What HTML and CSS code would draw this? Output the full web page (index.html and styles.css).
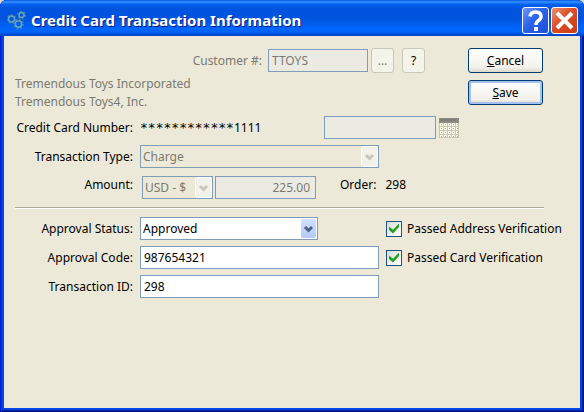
FILE: index.html
```html
<!DOCTYPE html>
<html lang="en">
<head>
  <meta charset="UTF-8" />
  <title>Credit Card Transaction Information</title>
  <link rel="stylesheet" href="styles.css">
</head>
<body>
  <div class="window">
    <header class="titlebar">
      <svg class="app-icon" width="20" height="20" viewBox="0 0 20 20" fill="none">
        <g stroke="#3f7fa0" stroke-width="3" stroke-dasharray="1.6 1.5">
          <circle cx="4.500" cy="9" r="3.500" /><circle cx="14.500" cy="5" r="3" /><circle cx="11.500" cy="14" r="4" />
        </g>
        <g stroke="#62a4c0" stroke-width="1.500">
          <circle cx="4.500" cy="9" r="3" /><circle cx="14.500" cy="5" r="2.500" /><circle cx="11.500" cy="14" r="3.200" />
        </g>
      </svg>
      <h1>Credit Card Transaction Information</h1>
      <button class="caption help" type="button" aria-label="Help">
        <svg width="25" height="25" viewBox="0 0 25 25"><path d="M7 8.500Q7.500 4 12.500 4Q18 4 18 8.500Q18 11 15.500 12.500Q13 14 13 17" fill="none" stroke="#fff" stroke-width="3.500" /><rect x="11" y="19" width="4" height="4" fill="#fff" /></svg>
      </button>
      <button class="caption close" type="button" aria-label="Close">
        <svg width="25" height="25" viewBox="0 0 25 25"><path d="M5 5L20 20M20 5L5 20" stroke="#fff" stroke-width="4" /></svg>
      </button>
    </header>

    <form class="content">
      <div class="upper">
        <div class="details">
          <div class="row customer">
            <label class="dim" for="customer">Customer #:</label>
            <input class="field" id="customer" type="text" value="TTOYS" disabled />
            <button class="small" type="button" disabled>...</button>
            <button class="small info" type="button">?</button>
          </div>
          <p class="company dim">Tremendous Toys Incorporated<br />Tremendous Toys4, Inc.</p>
          <div class="row card">
            <label class="name" for="expires">Credit Card Number:</label>
            <span class="number"><span class="mask">************</span>1111</span>
            <input class="field date" id="expires" type="text" disabled />
            <svg class="calendar" width="22" height="23" viewBox="0 0 22 23">
              <rect x="1" y="2" width="20" height="20" fill="#fbfaed" />
              <rect x="1" y="2" width="20" height="5" fill="#8b8a80" />
              <path d="M3 4H18" stroke="#6b6a64" stroke-dasharray="2 1" />
              <path d="M1 10.500H21M1 14.500H21M1 18.500H21M1 21.500H21M1.500 7V22M5.500 7V22M9.500 7V22M13.500 7V22M17.500 7V22M20.500 7V22" stroke="#c8c5b0" />
              <path d="M3 8.500H20M3 12.500H20M3 16.500H20M3 20.500H20" stroke="#a8a698" stroke-dasharray="1 3" />
            </svg>
          </div>
          <div class="row">
            <label class="name" for="type">Transaction Type:</label>
            <span class="combo type">
              <select class="field" id="type" disabled><option>Charge</option></select>
              <svg width="15" height="19" viewBox="0 0 15 19"><path d="M4 8L7.500 11.500L11 8" /></svg>
            </span>
          </div>
          <div class="row amount">
            <label class="name" for="amount">Amount:</label>
            <span class="combo currency">
              <select class="field" aria-label="Currency" disabled><option>USD - $</option></select>
              <svg width="15" height="19" viewBox="0 0 15 19"><path d="M4 8L7.500 11.500L11 8" /></svg>
            </span>
            <input class="field" id="amount" type="text" value="225.00" disabled />
            <span class="order"><span>Order:</span><span>298</span></span>
          </div>
        </div>
        <div class="actions">
          <button class="push" type="button"><span><u>C</u>ancel</span></button>
          <button class="push default" type="submit"><span><u>S</u>ave</span></button>
        </div>
      </div>

      <hr />

      <div class="lower">
        <div class="approval">
          <div class="row">
            <label class="name" for="status">Approval Status:</label>
            <span class="combo status">
              <select class="field" id="status"><option>Approved</option></select>
              <svg width="15" height="19" viewBox="0 0 15 19"><path d="M4 8L7.500 11.500L11 8" /></svg>
            </span>
          </div>
          <div class="row">
            <label class="name" for="code">Approval Code:</label>
            <input class="field" id="code" type="text" value="987654321" />
          </div>
          <div class="row">
            <label class="name" for="transaction">Transaction ID:</label>
            <input class="field" id="transaction" type="text" value="298" />
          </div>
        </div>
        <div class="checks">
          <label class="check"><input type="checkbox" checked />Passed Address Verification</label>
          <label class="check"><input type="checkbox" checked />Passed Card Verification</label>
        </div>
      </div>
    </form>
  </div>
</body>
</html>
```

FILE: styles.css
```css
* { box-sizing: border-box; }
body {
  margin: 0; background: #d8d5c4; color: #000;
  font: 12px/18px "Noto Sans", "Open Sans", sans-serif;
}
input, select, button { font: inherit; color: inherit; margin: 0; }

/* window frame */
.window {
  display: flex; flex-direction: column; min-height: 100vh;
  padding: 0 4px 4px; border-radius: 7px 7px 0 0;
  background: #0046e6;
  box-shadow: inset 1px 0 #0019cf, inset 2px 0 #0831d9, inset -1px 0 #00138c, inset -2px 0 #001ea0, inset 0 -1px #00138c, inset 0 -2px #001ea0;
}
.titlebar {
  display: flex; align-items: center; gap: 4px;
  height: 36px; margin: 0 -4px; padding: 4px 6px 0 7px;
  border-radius: 7px 7px 0 0;
  background: linear-gradient(#0058e6 0, #3a93ff 2px, #0562f0 4px, #0054e0 8px, #0053dd 18px, #0066ff 29px, #0064fa 32px, #0040c0 36px);
}
.app-icon { flex: none; }
h1 {
  flex: 1; margin: 0; color: #fff; white-space: nowrap;
  font: bold 15px/20px "Noto Sans", "Open Sans", sans-serif;
  text-shadow: 1px 1px #0a1883;
}
.caption {
  width: 27px; height: 27px; padding: 0; overflow: hidden;
  border: 1px solid #fff; border-radius: 3px;
}
.caption svg { display: block; }
.help { background: linear-gradient(135deg, #7096f5, #2a62ea 45%, #1c50d8); }
.close { background: linear-gradient(135deg, #ee9270, #dc4c26 45%, #c93d15); }
.titlebar .close { margin-left: -2px; }

/* form */
.content { flex: 1; padding: 12px 36px 12px 11px; background: #ece9d8; }
.upper { display: flex; gap: 8px; padding-right: 1px; }
.details { flex: 1; }
.row { display: flex; align-items: center; height: 23px; margin-bottom: 6px; }
.name { flex: none; width: 118px; margin-right: 7px; text-align: right; white-space: nowrap; }
.dim { color: #7b7a70; }
.field {
  width: 100%; height: 23px; padding: 0 3px; border-radius: 0;
  border: 1px solid #7f9db9; background: #fff; outline: none;
}
.field:disabled { color: #7b7a70; background: #ebebe4; opacity: 1; }
.customer { justify-content: flex-end; height: 25px; margin: 0; padding-right: 35px; }
.customer label { margin-right: 6px; }
.customer .field { width: 100px; }
.small {
  width: 23px; height: 25px; padding: 0; margin-left: 3px;
  border: 1px solid #c9c7ba; border-radius: 3px; background: #f5f4ea;
}
.small:disabled { color: #7b7a70; }
.small.info { margin-left: 8px; }
.company { margin: 2px 0 5px; }
.number { flex: 1; }
.mask { font: 13px/18px "DejaVu Sans Mono", "Liberation Mono", monospace; }
.date { width: 112px; }
.calendar { flex: none; margin-left: 2px; }
.type { width: 239px; }
.amount { margin: 8px 0; align-items: flex-start; }
.amount .currency { width: 71px; margin: 0 2px; }
.amount input { width: 101px; padding-right: 5px; text-align: right; }
.order { display: flex; gap: 9px; margin-left: 24px; }

/* drop-downs */
.combo { position: relative; flex: none; }
.combo select { display: block; appearance: none; padding: 0 20px 0 2px; }
.combo select:disabled { background: #ece9d8; }
.combo svg {
  position: absolute; top: 2px; right: 2px; pointer-events: none;
  fill: none; stroke: #4d6185; stroke-width: 3;
  border-radius: 2px; background: linear-gradient(#d2e0fe, #b4c9f8);
}
.combo select:disabled + svg { stroke: #c9c7ba; background: #f2f1ea; outline: 1px solid #fff; }
.status { width: 178px; }

/* push buttons */
.actions { display: flex; flex-direction: column; gap: 7px; width: 75px; }
.push {
  height: 25px; padding: 0; border: 1px solid #003c74; border-radius: 3px;
  background: linear-gradient(#fff, #f2f1ea 80%, #dcd8cc);
}
.default { box-shadow: inset 0 0 0 2px #a6c0f0; }

hr { height: 2px; margin: 0 0 8px; border: 0; border-top: 1px solid #aca899; background: #fff; }

.lower { display: flex; gap: 7px; }
.approval { flex: none; width: 364px; }
.checks { padding-top: 2px; }
.check { display: flex; align-items: center; gap: 5px; height: 19px; margin-bottom: 10px; white-space: nowrap; }
.check input {
  appearance: none; width: 16px; height: 16px;
  border: 1px solid #1c5180; background: linear-gradient(135deg, #dcdcd7, #fff);
}
.check input:checked::before {
  content: ""; display: block; width: 10px; height: 10px; margin: 2px;
  background: #21a121; clip-path: polygon(0 30%, 40% 62%, 100% 0, 100% 34%, 40% 100%, 0 64%);
}
```
